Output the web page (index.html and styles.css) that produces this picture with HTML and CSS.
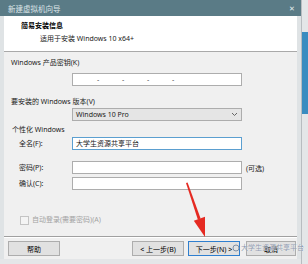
FILE: index.html
```html
<!DOCTYPE html>
<html lang="zh-CN">
<head>
  <meta charset="UTF-8">
  <title>新建虚拟机向导</title>
  <link rel="stylesheet" href="styles.css">
</head>
<body>
  <div class="window">
    <div class="titlebar">
      <span class="title-text">新建虚拟机向导</span>
      <span class="close">✕</span>
    </div>

    <div class="frame">
      <div class="header">
        <div class="header-title">简易安装信息</div>
        <div class="header-sub">适用于安装 Windows 10 x64+</div>
      </div>

      <div class="content">
        <div class="label">Windows 产品密钥(K)</div>
        <div class="field key-field">
          <span class="dash">-</span><span class="dash">-</span><span class="dash">-</span><span class="dash">-</span>
        </div>

        <div class="label label-version">要安装的 Windows 版本(V)</div>
        <div class="field select">
          <span>Windows 10 Pro</span>
          <svg class="chevron" width="7" height="5" viewBox="0 0 7 5"><path d="M1 1 L3.5 3.5 L6 1" fill="none" stroke="#666" stroke-width="1"/></svg>
        </div>

        <div class="label label-group">个性化 Windows</div>
        <div class="personal">
          <div class="plabel">全名(F):</div>
          <div class="field focused">大学生资源共享平台</div>
          <div></div>

          <div class="plabel row-pass">密码(P):</div>
          <div class="field row-pass"></div>
          <div class="hint row-pass">(可选)</div>

          <div class="plabel">确认(C):</div>
          <div class="field"></div>
          <div></div>
        </div>

        <div class="check-row">
          <span class="checkbox"></span>
          <span>自动登录(需要密码)(A)</span>
        </div>
      </div>

      <div class="footer">
        <button class="btn">帮助</button>
        <div class="nav">
          <button class="btn">&lt; 上一步(B)</button>
          <button class="btn btn-next">下一步(N) &gt;</button>
          <button class="btn btn-cancel">取消</button>
        </div>
      </div>

      <svg class="arrow" width="30" height="60" viewBox="180 180 30 60">
        <polygon points="186,183 187.6,182.6 200.6,218.4 197.8,219.4" fill="#e52a22"/>
        <polygon points="193.8,220.8 205,216.8 205,237" fill="#e52a22"/>
      </svg>

      <div class="watermark">
        <svg width="8" height="8" viewBox="0 0 8 8"><circle cx="4" cy="4" r="3" fill="none" stroke="#7d8fa6" stroke-width="1"/></svg>
        <span>大学生资源共享平台</span>
      </div>
    </div>
  </div>

  <div class="side">
    <div class="side-blue"></div>
  </div>
</body>
</html>
```

FILE: styles.css
```css
body {
  margin: 0;
  width: 308px;
  height: 264px;
  overflow: hidden;
  display: flex;
  background: #e4e6e8;
  font-family: "Noto Sans", "Noto Sans CJK SC", sans-serif;
  font-size: 7px;
  color: #1a1a1a;
}

.window {
  width: 302px;
  height: 259px;
  display: flex;
  flex-direction: column;
}

.titlebar {
  height: 16px;
  background: #5a7b86;
  display: flex;
  align-items: center;
  justify-content: space-between;
  padding: 0 6px 0 8px;
  color: #dce5e8;
  font-size: 7.5px;
}

.close {
  font-size: 7px;
  color: #e6eef0;
}

.frame {
  position: relative;
  flex: 1;
  display: flex;
  flex-direction: column;
  border-left: 4px solid #dfe3e5;
  border-right: 4px solid #dfe3e5;
  background: #f0f0f0;
}

.header {
  height: 36px;
  background: #fff;
  border-bottom: 1px solid #a9a9a9;
  box-sizing: border-box;
  padding: 5px 0 0 17px;
}

.header-title {
  font-weight: bold;
  line-height: 10px;
  color: #000;
}

.header-sub {
  line-height: 10px;
  margin: 3px 0 0 19px;
}

.content {
  flex: 1;
  padding: 6px 0 0 7px;
  display: flex;
  flex-direction: column;
  align-items: flex-start;
}

.label {
  line-height: 10px;
}

.field {
  box-sizing: border-box;
  width: 170px;
  height: 13px;
  border: 1px solid #adadad;
  background: #fff;
  line-height: 11px;
  padding-left: 3px;
}

.key-field {
  margin: 5px 0 0 61px;
  display: flex;
  padding-left: 24px;
  color: #444;
}

.dash {
  width: 25px;
}

.label-version {
  margin-top: 11px;
}

.select {
  margin: 1px 0 0 61px;
  background: #e5e5e5;
  display: flex;
  align-items: center;
  justify-content: space-between;
  padding-right: 3px;
}

.label-group {
  margin: 4px 0 0 1px;
}

.personal {
  margin: 2px 0 0 8px;
  display: grid;
  grid-template-columns: 53px 170px auto;
  row-gap: 3px;
  align-items: center;
}

.plabel {
  line-height: 10px;
}

.row-pass {
  margin-top: 8px;
}

.focused {
  border-color: #5b9fd0;
}

.hint {
  padding-left: 4px;
}

.check-row {
  margin: 25px 0 0 9px;
  display: flex;
  align-items: center;
  gap: 3px;
  color: #a3a3a3;
  line-height: 10px;
}

.checkbox {
  width: 7px;
  height: 7px;
  border: 1px solid #c4c4c4;
  background: #f4f4f4;
}

.footer {
  height: 23px;
  box-sizing: border-box;
  border-top: 1px solid #a0a0a0;
  box-shadow: inset 0 1px 0 #fff;
  padding: 4px 1px 0 4px;
  display: flex;
  justify-content: space-between;
  align-items: flex-start;
}

.nav {
  display: flex;
  gap: 4px;
}

.btn {
  width: 52px;
  height: 15px;
  padding: 0;
  border: 1px solid #adadad;
  background: #e1e1e1;
  font-family: "Noto Sans", "Noto Sans CJK SC", sans-serif;
  font-size: 7px;
  color: #000;
}

.btn-next {
  border-color: #2f7fcf;
}

.btn-cancel {
  width: 50px;
  margin-left: 2px;
}

.arrow {
  position: absolute;
  left: 176px;
  top: 164px;
}

.watermark {
  position: absolute;
  left: 228px;
  top: 227px;
  display: flex;
  align-items: center;
  gap: 1px;
  white-space: nowrap;
  color: rgba(90, 110, 140, 0.7);
  font-size: 7px;
  line-height: 10px;
  text-shadow: 0 0 1px #fff;
}

.side {
  width: 6px;
  border-left: 1px solid #b8bcc0;
}

.side-blue {
  margin-top: 32px;
  height: 82px;
  background: #3a8cc0;
}
```
